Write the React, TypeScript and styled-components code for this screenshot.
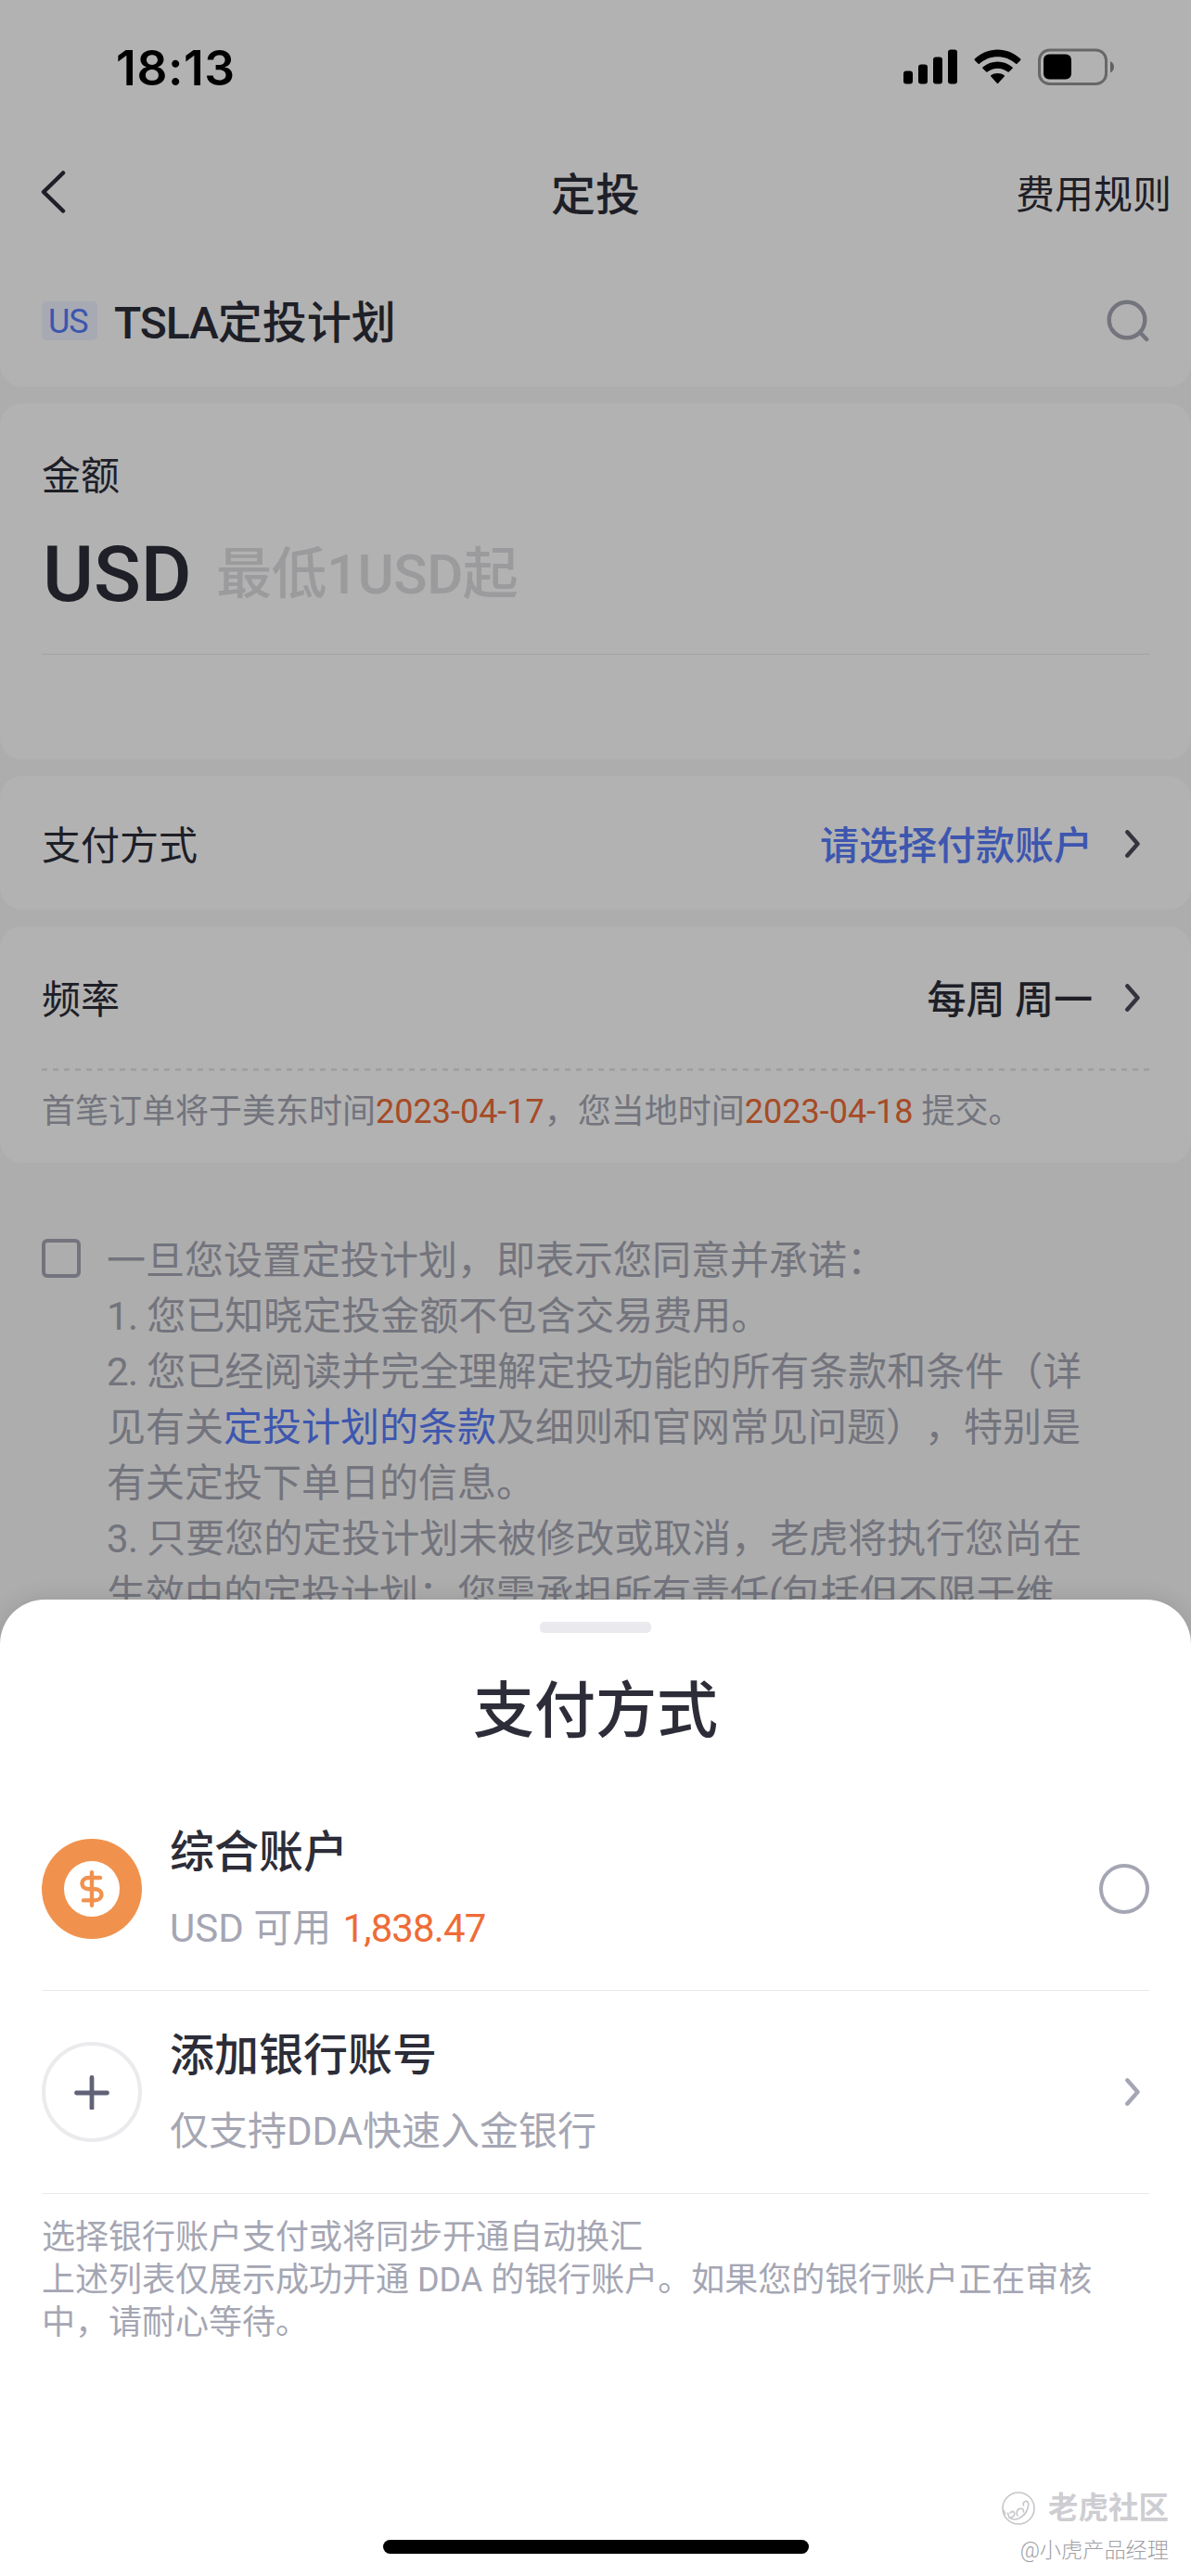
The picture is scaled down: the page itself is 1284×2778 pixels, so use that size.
import React from "react";
import styled, { createGlobalStyle } from "styled-components";

const ink = "#2c2d38";
const muted = "#a5a6b3";
const blue = "#587bfb";
const orange = "#ee6c36";
const hairline = "#e8e8eb";

const GlobalStyle = createGlobalStyle`
  * { box-sizing: border-box; }
  body {
    margin: 0;
    background: #f8f8f8;
    font-family: Roboto, "Noto Sans CJK SC", sans-serif;
    text-spacing-trim: space-all;
    color: ${ink};
  }
`;

const Screen = styled.main`
  position: relative;
  width: 1284px;
  height: 2778px;
  overflow: hidden;
  background: #f8f8f8;
`;

const PlanPage = styled.div`
  display: flex;
  flex-direction: column;
  gap: 18px;
`;

const Card = styled.section<{ $height: number }>`
  display: flex;
  flex-direction: column;
  height: ${(p) => p.$height}px;
  padding: 0 45px;
  background: #fff;
  border-radius: 24px;
`;

const HeaderCard = styled(Card)`
  border-radius: 0 0 24px 24px;
  padding: 0;
`;

const StatusBar = styled.div`
  display: flex;
  align-items: center;
  justify-content: space-between;
  height: 144px;
  padding: 0 82px 0 125px;
  color: #000;
`;

const Clock = styled.time`
  padding-top: 2px;
  font: 600 51.5px/60px Inter, sans-serif;
  letter-spacing: 0.6px;
`;

const StatusIcons = styled.div`
  display: flex;
  align-items: center;
  gap: 18px;
`;

const NavBar = styled.nav`
  display: grid;
  grid-template-columns: 1fr auto 1fr;
  align-items: center;
  height: 126px;
  padding: 0 21px;
`;

const BackButton = styled.span`
  display: flex;
  padding-left: 22px;
`;

const NavTitle = styled.h1`
  margin: 0;
  padding-top: 7px;
  font-size: 48px;
  font-weight: 500;
  line-height: 60px;
`;

const NavAction = styled.span`
  justify-self: end;
  padding-top: 7px;
  font-size: 42px;
  line-height: 60px;
`;

const StockRow = styled.div`
  display: flex;
  align-items: center;
  height: 147px;
  padding: 4px 44px 0 45px;
`;

const Market = styled.span`
  width: 60px;
  height: 42px;
  margin-right: 18px;
  padding-left: 7px;
  border-radius: 5px;
  background: #eff4ff;
  color: ${blue};
  font-size: 36px;
  line-height: 44px;
  letter-spacing: -1.2px;
`;

const StockName = styled.span`
  flex: 1;
  padding-top: 6px;
  font-size: 48px;
  font-weight: 500;
  line-height: 60px;
`;

const Ticker = styled.span`
  letter-spacing: -1.1px;
`;

const FieldLabel = styled.div`
  padding-top: 49px;
  font-size: 42px;
  line-height: 60px;
`;

const AmountRow = styled.div`
  display: flex;
  align-items: center;
  height: 162px;
  padding-bottom: 10px;
  border-bottom: 1px solid ${hairline};
`;

const Currency = styled.span`
  width: 188px;
  padding-left: 1px;
  font-size: 84px;
  font-weight: 500;
  line-height: 100px;
`;

const Placeholder = styled.span`
  color: #dedee1;
  font-size: 60px;
  font-weight: 500;
  line-height: 100px;
  letter-spacing: -0.5px;
`;

const SettingRow = styled.div<{ $height: number }>`
  display: flex;
  align-items: center;
  justify-content: space-between;
  height: ${(p) => p.$height}px;
  padding: 1px 10px 0 0;
  font-size: 42px;
  line-height: 60px;
`;

const RowText = styled.span`
  padding-top: 6px;
`;

const SettingValue = styled.span<{ $link?: boolean }>`
  display: flex;
  align-items: center;
  gap: 35px;
  font-weight: 500;
  color: ${(p) => (p.$link ? blue : ink)};
`;

const Dashes = styled.div`
  height: 3px;
  background: repeating-linear-gradient(90deg, #e6e6ea 0 6px, transparent 6px 12px);
`;

const ScheduleNote = styled.p`
  margin: 0;
  padding-top: 17px;
  color: ${muted};
  font-size: 36px;
  line-height: 54px;
  white-space: nowrap;
`;

const DateText = styled.span`
  color: ${orange};
`;

const Agreement = styled.div`
  display: flex;
  gap: 28px;
  padding: 54px 45px 0;
`;

const Checkbox = styled.span`
  width: 42px;
  height: 42px;
  margin-top: 10px;
  border: 4px solid ${muted};
  border-radius: 6px;
`;

const Terms = styled.div`
  padding-top: 4px;
  color: ${muted};
  font-size: 42px;
  line-height: 60px;
  white-space: nowrap;
`;

const TermsLink = styled.span`
  color: ${blue};
`;

const Numeral = styled.span`
  letter-spacing: -0.6px;
`;

const Scrim = styled.div`
  position: absolute;
  inset: 0;
  background: rgba(0, 0, 0, 0.3);
`;

const Sheet = styled.section`
  position: absolute;
  left: 0;
  right: 0;
  bottom: 0;
  height: 1053px;
  display: flex;
  flex-direction: column;
  padding: 24px 45px;
  background: #fff;
  border-radius: 48px 48px 0 0;
  box-shadow: 0 0 24px rgba(0, 0, 0, 0.12);
`;

const Grabber = styled.div`
  align-self: center;
  width: 120px;
  height: 12px;
  border-radius: 5px;
  background: #e9e9ee;
`;

const SheetTitle = styled.h2`
  margin: 37px 0 34px;
  font-size: 66px;
  font-weight: 500;
  line-height: 96px;
  text-align: center;
`;

const Method = styled.div`
  display: flex;
  align-items: center;
  height: 219px;
  border-bottom: 1px solid ${hairline};
`;

const MethodBadge = styled.div<{ $filled?: boolean }>`
  display: flex;
  align-items: center;
  justify-content: center;
  width: 108px;
  height: 108px;
  border-radius: 50%;
  background: ${(p) => (p.$filled ? "#f0924e" : "#fff")};
  border: ${(p) => (p.$filled ? "0" : "4px solid #ebebee")};
`;

const MethodText = styled.div`
  flex: 1;
  padding-left: 30px;
`;

const MethodName = styled.div`
  font-size: 48px;
  font-weight: 500;
  line-height: 70px;
`;

const MethodHint = styled.div`
  margin-top: 16px;
  color: ${muted};
  font-size: 42px;
  line-height: 62px;
`;

const Balance = styled.span`
  padding-left: 2px;
  color: ${orange};
  letter-spacing: -0.9px;
`;

const Radio = styled.span`
  width: 54px;
  height: 54px;
  border: 4px solid ${muted};
  border-radius: 50%;
`;

const ChevronSlot = styled.span`
  display: flex;
  padding-right: 10px;
`;

const Footnote = styled.p`
  margin: 0;
  padding-top: 24px;
  color: ${muted};
  font-size: 36px;
  line-height: 46px;
  white-space: nowrap;
`;

const HomeIndicator = styled.div`
  position: absolute;
  left: 413px;
  bottom: 24px;
  width: 459px;
  height: 15px;
  border-radius: 8px;
  background: #000;
`;

const Watermark = styled.div`
  position: absolute;
  right: 24px;
  bottom: 9px;
  display: flex;
  flex-direction: column;
  align-items: flex-end;
`;

const Brand = styled.div`
  display: flex;
  align-items: center;
  gap: 14px;
  margin-bottom: 3px;
  font-size: 32.5px;
  font-weight: 700;
  line-height: 46px;
  color: #cdcdd2;
`;

const Author = styled.div`
  font-size: 23.2px;
  font-weight: 300;
  line-height: 38px;
  color: #a0a0a6;
`;

const Chevron = ({ color }: { color: string }) => (
  <svg width="16" height="30" viewBox="0 0 16 30" fill="none">
    <path d="M2.3 2.3 L13.5 15 L2.3 27.7" stroke={color} strokeWidth="4.4" strokeLinecap="round" strokeLinejoin="round" />
  </svg>
);

const BackIcon = () => (
  <svg width="28" height="46" viewBox="0 0 28 46" fill="none">
    <path d="M25 2.5 L4 23 L25 43.5" stroke={ink} strokeWidth="4.5" strokeLinecap="round" strokeLinejoin="round" />
  </svg>
);

const SearchIcon = () => (
  <svg width="47" height="46" viewBox="0 0 47 46" fill="none">
    <circle cx="22" cy="22" r="19.3" stroke={muted} strokeWidth="4.4" />
    <path d="M36 35.5 L43.2 43" stroke={muted} strokeWidth="4.4" strokeLinecap="round" />
  </svg>
);

const SignalIcon = () => (
  <svg width="58" height="38" viewBox="0 0 58 38">
    <rect x="0" y="23.5" width="10" height="14" rx="3" />
    <rect x="16" y="16.5" width="10" height="21" rx="3" />
    <rect x="32" y="8.5" width="10" height="29" rx="3" />
    <rect x="48" y="0.5" width="10" height="37" rx="3" />
  </svg>
);

const WifiIcon = () => (
  <svg width="51" height="38" viewBox="0 0 51 38">
    <path d="M0.8 10.6 C14.5 -2.9 36.5 -2.9 50.2 10.6 Q50.8 11.2 50.2 11.9 L46.4 15.7 Q45.8 16.2 45.1 15.7 C34 5.8 17 5.8 5.9 15.7 Q5.2 16.2 4.6 15.7 L0.8 11.9 Q0.2 11.2 0.8 10.6Z" />
    <path d="M9.4 19.4 C18.5 11.4 32.5 11.4 41.6 19.4 Q42.2 20 41.6 20.7 L37.7 24.6 Q37.1 25.1 36.5 24.6 C30.2 19.3 20.8 19.3 14.5 24.6 Q13.9 25.1 13.3 24.6 L9.4 20.7 Q8.8 20 9.4 19.4Z" />
    <path d="M18.3 28.3 C22.3 25.3 28.7 25.3 32.7 28.3 Q33.3 28.9 32.7 29.5 L26.2 36.8 Q25.5 37.4 24.8 36.8 L18.3 29.5 Q17.7 28.9 18.3 28.3Z" />
  </svg>
);

const BatteryIcon = () => (
  <svg width="83" height="40" viewBox="0 0 83 40">
    <rect x="1.5" y="2" width="72" height="36.5" rx="11" fill="none" stroke="#000" strokeOpacity="0.42" strokeWidth="3" />
    <rect x="6" y="6.5" width="30" height="27" rx="6" />
    <path d="M78 14 Q82 16.5 82 20.2 Q82 24 78 26.5Z" fillOpacity="0.45" />
  </svg>
);

const DollarCoin = () => (
  <svg width="60" height="60" viewBox="0 0 60 60" fill="none">
    <circle cx="30" cy="30" r="30" fill="#fff" />
    <path
      d="M39 18 H27 C17 18 17 30.2 27 30.2 H33 C43 30.2 43 42.4 33 42.4 H21 M30 12.2 V47.8"
      stroke="#f0924e"
      strokeWidth="4.4"
      strokeLinecap="round"
      strokeLinejoin="round"
    />
  </svg>
);

const PlusIcon = () => (
  <svg width="38" height="38" viewBox="0 0 38 38" fill="none">
    <path d="M2.5 20 H35.5 M19 3.5 V36.5" stroke="#616278" strokeWidth="4.8" strokeLinecap="round" />
  </svg>
);

const TigerLogo = () => (
  <svg width="36" height="36" viewBox="0 0 36 36" fill="none" stroke="#c6c6cb">
    <circle cx="18" cy="18" r="17" strokeWidth="1.6" />
    <path
      d="M2 20 L4 24 M6.500 23 L8 28 Q14 32 20 28 Q27 24 28.500 16 Q29.500 9.500 25.500 10.500 Q22.500 11.500 23.500 15 M9 23 Q12 20 13.500 22.500 Q14.500 27 10 27.500 M17 26 Q14.500 21 19 18.500 Q24 17.500 23.500 22"
      strokeWidth="1.6"
      strokeLinecap="round"
    />
  </svg>
);

export default function App() {
  return (
    <Screen>
      <GlobalStyle />
      <PlanPage>
        <HeaderCard $height={417}>
          <StatusBar>
            <Clock>18:13</Clock>
            <StatusIcons>
              <SignalIcon />
              <WifiIcon />
              <BatteryIcon />
            </StatusIcons>
          </StatusBar>
          <NavBar>
            <BackButton>
              <BackIcon />
            </BackButton>
            <NavTitle>定投</NavTitle>
            <NavAction>费用规则</NavAction>
          </NavBar>
          <StockRow>
            <Market>US</Market>
            <StockName>
              <Ticker>TSLA</Ticker>定投计划
            </StockName>
            <SearchIcon />
          </StockRow>
        </HeaderCard>

        <Card $height={384}>
          <FieldLabel>金额</FieldLabel>
          <AmountRow>
            <Currency>USD</Currency>
            <Placeholder>最低1USD起</Placeholder>
          </AmountRow>
        </Card>

        <Card $height={144}>
          <SettingRow $height={144}>
            <RowText>支付方式</RowText>
            <SettingValue $link>
              <RowText>请选择付款账户</RowText>
              <Chevron color="#4a4b58" />
            </SettingValue>
          </SettingRow>
        </Card>

        <Card $height={255}>
          <SettingRow $height={153}>
            <RowText>频率</RowText>
            <SettingValue>
              <RowText>每周 周一</RowText>
              <Chevron color="#4a4b58" />
            </SettingValue>
          </SettingRow>
          <Dashes />
          <ScheduleNote>
            首笔订单将于美东时间<DateText>2023-04-17</DateText>，您当地时间<DateText>2023-04-18</DateText> 提交。
          </ScheduleNote>
        </Card>

        <Agreement>
          <Checkbox />
          <Terms>
            <div>一旦您设置定投计划，即表示您同意并承诺：</div>
            <div><Numeral>1. </Numeral>您已知晓定投金额不包含交易费用。</div>
            <div><Numeral>2. </Numeral>您已经阅读并完全理解定投功能的所有条款和条件（详</div>
            <div>见有关<TermsLink>定投计划的条款</TermsLink>及细则和官网常见问题），特别是</div>
            <div>有关定投下单日的信息。</div>
            <div><Numeral>3. </Numeral>只要您的定投计划未被修改或取消，老虎将执行您尚在</div>
            <div>生效中的定投计划；您需承担所有责任<Numeral>(</Numeral>包括但不限于维</div>
          </Terms>
        </Agreement>
      </PlanPage>

      <Scrim />

      <Sheet>
        <Grabber />
        <SheetTitle>支付方式</SheetTitle>
        <Method>
          <MethodBadge $filled>
            <DollarCoin />
          </MethodBadge>
          <MethodText>
            <MethodName>综合账户</MethodName>
            <MethodHint>
              USD 可用 <Balance>1,838.47</Balance>
            </MethodHint>
          </MethodText>
          <Radio />
        </Method>
        <Method>
          <MethodBadge>
            <PlusIcon />
          </MethodBadge>
          <MethodText>
            <MethodName>添加银行账号</MethodName>
            <MethodHint>仅支持DDA快速入金银行</MethodHint>
          </MethodText>
          <ChevronSlot>
            <Chevron color={muted} />
          </ChevronSlot>
        </Method>
        <Footnote>
          选择银行账户支付或将同步开通自动换汇
          <br />
          上述列表仅展示成功开通 DDA 的银行账户。如果您的银行账户正在审核
          <br />
          中，请耐心等待。
        </Footnote>
      </Sheet>

      <HomeIndicator />
      <Watermark>
        <Brand>
          <TigerLogo />
          老虎社区
        </Brand>
        <Author>@小虎产品经理</Author>
      </Watermark>
    </Screen>
  );
}
